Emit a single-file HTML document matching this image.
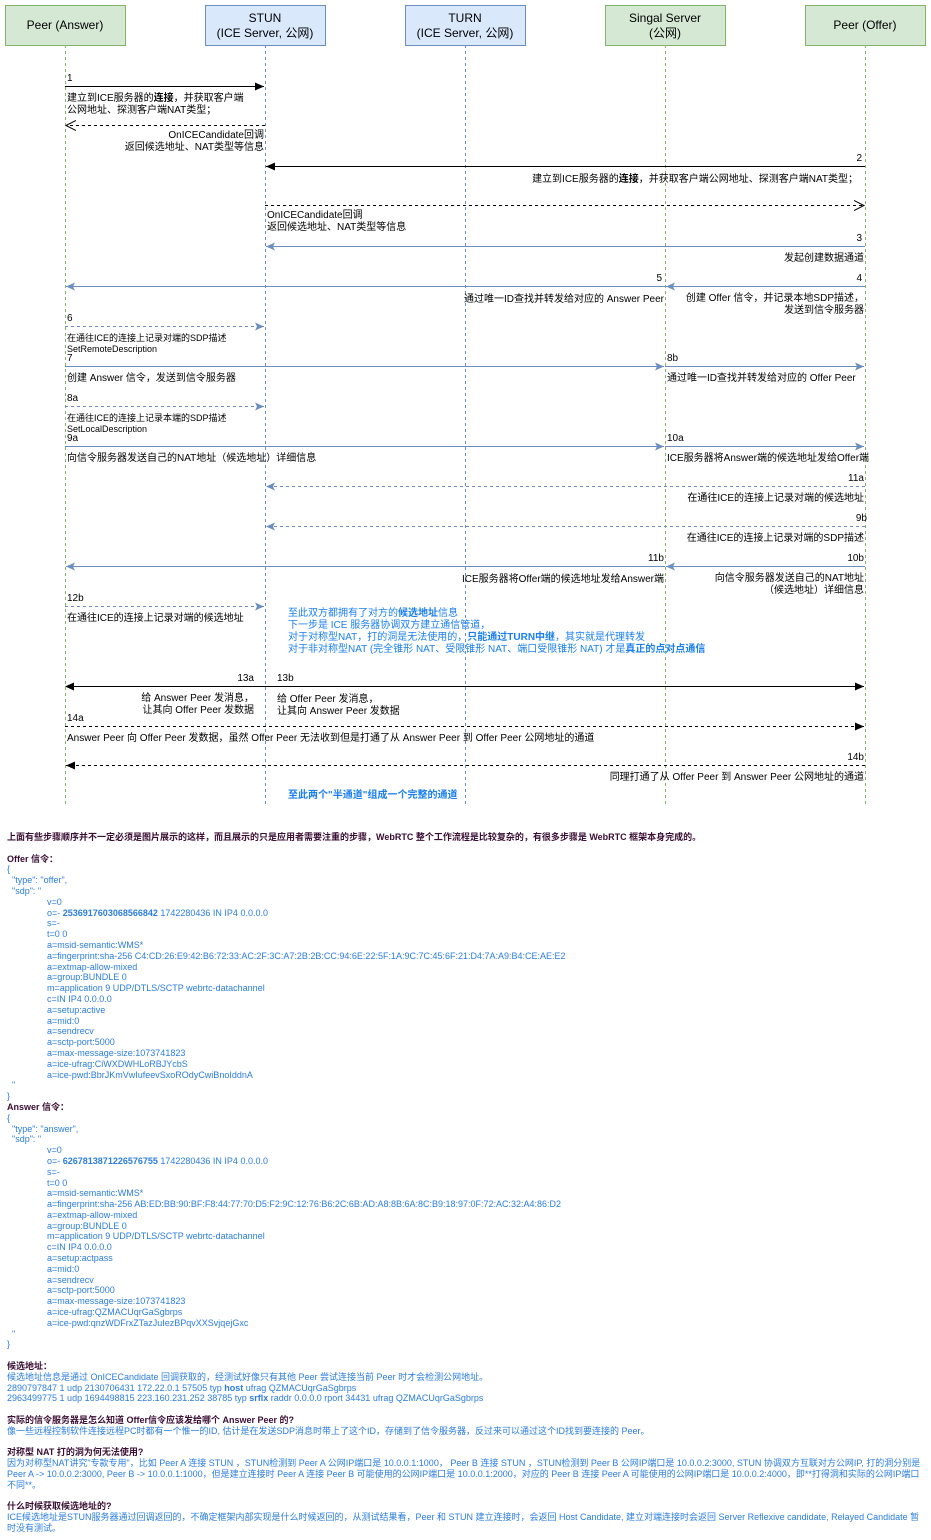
<!DOCTYPE html>
<html><head><meta charset="utf-8"><style>
body{margin:0;width:931px;height:1540px;background:#fff;position:relative;overflow:hidden;font-family:"Liberation Sans","Noto Sans CJK SC",sans-serif;}
svg text{font-family:"Liberation Sans","Noto Sans CJK SC",sans-serif;}
#doc{position:absolute;left:7px;top:832px;font-size:9px;line-height:10.8px;color:#2b7de0;white-space:nowrap;}
#doc .h{color:#3a0d33;font-weight:bold;}
.i1{padding-left:5px}.i2{padding-left:40px}
</style></head><body>
<svg width="931" height="815" style="position:absolute;left:0;top:0">
<defs>
<marker id="bf" markerWidth="10" markerHeight="10" refX="9" refY="5" orient="auto" markerUnits="userSpaceOnUse"><path d="M0,1 L9,5 L0,9 Z" fill="#000"/></marker>
<marker id="bo" markerWidth="12" markerHeight="12" refX="10" refY="6" orient="auto" markerUnits="userSpaceOnUse"><path d="M0,1 L10,6 L0,11" fill="none" stroke="#000"/></marker>
<marker id="uf" markerWidth="10" markerHeight="10" refX="9" refY="5" orient="auto" markerUnits="userSpaceOnUse"><path d="M0,1 L9,5 L0,9 L2,5 Z" fill="#6c8ebf"/></marker>
<marker id="bs" markerWidth="10" markerHeight="10" refX="1" refY="5" orient="auto" markerUnits="userSpaceOnUse"><path d="M9,1 L0,5 L9,9 Z" fill="#000"/></marker>
</defs>
<g stroke-dasharray="3,3" stroke-width="1">
<line x1="65.5" y1="45" x2="65.5" y2="805" stroke="#82b366"/>
<line x1="265.5" y1="45" x2="265.5" y2="805" stroke="#6c8ebf"/>
<line x1="465.5" y1="45" x2="465.5" y2="805" stroke="#6c8ebf"/>
<line x1="665.5" y1="45" x2="665.5" y2="805" stroke="#82b366"/>
<line x1="865.5" y1="45" x2="865.5" y2="805" stroke="#82b366"/>
</g>
<rect x="5.5" y="5.5" width="120" height="40" fill="#d5e8d4" stroke="#82b366"/>
<rect x="205.5" y="5.5" width="120" height="40" fill="#dae8fc" stroke="#6c8ebf"/>
<rect x="405.5" y="5.5" width="120" height="40" fill="#dae8fc" stroke="#6c8ebf"/>
<rect x="605.5" y="5.5" width="120" height="40" fill="#d5e8d4" stroke="#82b366"/>
<rect x="805.5" y="5.5" width="120" height="40" fill="#d5e8d4" stroke="#82b366"/>
<g font-size="12" text-anchor="middle" fill="#000">
<text x="65" y="29">Peer (Answer)</text>
<text x="265" y="22">STUN</text><text x="265" y="37">(ICE Server, 公网)</text>
<text x="465" y="22">TURN</text><text x="465" y="37">(ICE Server, 公网)</text>
<text x="665" y="22">Singal Server</text><text x="665" y="37">(公网)</text>
<text x="865" y="29">Peer (Offer)</text>
</g>
<g fill="none" stroke-width="1">
<line x1="65" y1="86.5" x2="264" y2="86.5" stroke="#000" marker-end="url(#bf)"/>
<line x1="265" y1="125.5" x2="66" y2="125.5" stroke="#000" stroke-dasharray="3,3" marker-end="url(#bo)"/>
<line x1="865" y1="166.5" x2="266" y2="166.5" stroke="#000" marker-end="url(#bf)"/>
<line x1="265" y1="205.5" x2="864" y2="205.5" stroke="#000" stroke-dasharray="3,3" marker-end="url(#bo)"/>
<line x1="865" y1="246.5" x2="266" y2="246.5" stroke="#6c8ebf" marker-end="url(#uf)"/>
<line x1="665" y1="286.5" x2="66" y2="286.5" stroke="#6c8ebf" marker-end="url(#uf)"/>
<line x1="865" y1="286.5" x2="666" y2="286.5" stroke="#6c8ebf" marker-end="url(#uf)"/>
<line x1="65" y1="326.5" x2="264" y2="326.5" stroke="#6c8ebf" stroke-dasharray="3,3" marker-end="url(#uf)"/>
<line x1="65" y1="366.5" x2="664" y2="366.5" stroke="#6c8ebf" marker-end="url(#uf)"/>
<line x1="665" y1="366.5" x2="864" y2="366.5" stroke="#6c8ebf" marker-end="url(#uf)"/>
<line x1="65" y1="406.5" x2="264" y2="406.5" stroke="#6c8ebf" stroke-dasharray="3,3" marker-end="url(#uf)"/>
<line x1="65" y1="446.5" x2="664" y2="446.5" stroke="#6c8ebf" marker-end="url(#uf)"/>
<line x1="665" y1="446.5" x2="864" y2="446.5" stroke="#6c8ebf" marker-end="url(#uf)"/>
<line x1="865" y1="486.5" x2="266" y2="486.5" stroke="#6c8ebf" stroke-dasharray="3,3" marker-end="url(#uf)"/>
<line x1="865" y1="526.5" x2="266" y2="526.5" stroke="#6c8ebf" stroke-dasharray="3,3" marker-end="url(#uf)"/>
<line x1="665" y1="566.5" x2="66" y2="566.5" stroke="#6c8ebf" marker-end="url(#uf)"/>
<line x1="865" y1="566.5" x2="666" y2="566.5" stroke="#6c8ebf" marker-end="url(#uf)"/>
<line x1="65" y1="606.5" x2="264" y2="606.5" stroke="#6c8ebf" stroke-dasharray="3,3" marker-end="url(#uf)"/>
<line x1="66" y1="686.5" x2="864" y2="686.5" stroke="#000" marker-end="url(#bf)" marker-start="url(#bs)"/>
<line x1="65" y1="726.5" x2="864" y2="726.5" stroke="#000" stroke-dasharray="3,3" marker-end="url(#bf)"/>
<line x1="865" y1="765.5" x2="66" y2="765.5" stroke="#000" stroke-dasharray="3,3" marker-end="url(#bf)"/>
</g>
<g font-size="10" fill="#000">
<text x="67" y="81">1</text>
<text x="67" y="101">建立到ICE服务器的<tspan font-weight="bold">连接</tspan>，并获取客户端</text>
<text x="67" y="113">公网地址、探测客户端NAT类型；</text>
<text x="264" y="138" text-anchor="end">OnICECandidate回调</text>
<text x="264" y="150" text-anchor="end">返回候选地址、NAT类型等信息</text>
<text x="862" y="161" text-anchor="end">2</text>
<text x="858" y="182" text-anchor="end">建立到ICE服务器的<tspan font-weight="bold">连接</tspan>，并获取客户端公网地址、探测客户端NAT类型；</text>
<text x="267" y="218">OnICECandidate回调</text>
<text x="267" y="230">返回候选地址、NAT类型等信息</text>
<text x="862" y="241" text-anchor="end">3</text>
<text x="864" y="261" text-anchor="end">发起创建数据通道</text>
<text x="662" y="281" text-anchor="end">5</text>
<text x="862" y="281" text-anchor="end">4</text>
<text x="664" y="302" text-anchor="end">通过唯一ID查找并转发给对应的 Answer Peer</text>
<text x="864" y="301" text-anchor="end">创建 Offer 信令，并记录本地SDP描述，</text>
<text x="864" y="313" text-anchor="end">发送到信令服务器</text>
<text x="67" y="321">6</text>
<text x="67" y="341" font-size="9">在通往ICE的连接上记录对端的SDP描述</text>
<text x="67" y="352" font-size="9">SetRemoteDescription</text>
<text x="67" y="361">7</text>
<text x="667" y="361">8b</text>
<text x="67" y="381">创建 Answer 信令，发送到信令服务器</text>
<text x="667" y="381">通过唯一ID查找并转发给对应的 Offer Peer</text>
<text x="67" y="401">8a</text>
<text x="67" y="421" font-size="9">在通往ICE的连接上记录本端的SDP描述</text>
<text x="67" y="432" font-size="9">SetLocalDescription</text>
<text x="67" y="441">9a</text>
<text x="667" y="441">10a</text>
<text x="67" y="461">向信令服务器发送自己的NAT地址（候选地址）详细信息</text>
<text x="667" y="461">ICE服务器将Answer端的候选地址发给Offer端</text>
<text x="864" y="481" text-anchor="end">11a</text>
<text x="864" y="501" text-anchor="end">在通往ICE的连接上记录对端的候选地址</text>
<text x="867" y="521" text-anchor="end">9b</text>
<text x="864" y="541" text-anchor="end">在通往ICE的连接上记录对端的SDP描述</text>
<text x="664" y="561" text-anchor="end">11b</text>
<text x="864" y="561" text-anchor="end">10b</text>
<text x="664" y="582" text-anchor="end">ICE服务器将Offer端的候选地址发给Answer端</text>
<text x="864" y="581" text-anchor="end">向信令服务器发送自己的NAT地址</text>
<text x="864" y="593" text-anchor="end">（候选地址）详细信息</text>
<text x="67" y="601">12b</text>
<text x="67" y="621">在通往ICE的连接上记录对端的候选地址</text>
<text x="254" y="681" text-anchor="end">13a</text>
<text x="277" y="681">13b</text>
<text x="254" y="701" text-anchor="end">给 Answer Peer 发消息，</text>
<text x="254" y="713" text-anchor="end">让其向 Offer Peer 发数据</text>
<text x="277" y="702">给 Offer Peer 发消息，</text>
<text x="277" y="714">让其向 Answer Peer 发数据</text>
<text x="67" y="721">14a</text>
<text x="67" y="741">Answer Peer 向 Offer Peer 发数据，虽然 Offer Peer 无法收到但是打通了从 Answer Peer 到 Offer Peer 公网地址的通道</text>
<text x="864" y="760" text-anchor="end">14b</text>
<text x="864" y="780" text-anchor="end">同理打通了从 Offer  Peer 到 Answer Peer 公网地址的通道</text>
</g>
<g font-size="10" fill="#1a7ff0">
<text x="288" y="616">至此双方都拥有了对方的<tspan font-weight="bold">候选地址</tspan>信息</text>
<text x="288" y="628">下一步是 ICE 服务器协调双方建立通信管道，</text>
<text x="288" y="640">对于对称型NAT，打的洞是无法使用的，<tspan font-weight="bold">只能通过TURN中继</tspan>，其实就是代理转发</text>
<text x="288" y="652">对于非对称型NAT (完全锥形 NAT、受限锥形 NAT、端口受限锥形 NAT) 才是<tspan font-weight="bold">真正的点对点通信</tspan></text>
<text x="288" y="798" font-weight="bold">至此两个"半通道"组成一个完整的通道</text>
</g>
</svg>
<div id="doc">
<div class="h">上面有些步骤顺序并不一定必须是图片展示的这样，而且展示的只是应用者需要注重的步骤，WebRTC 整个工作流程是比较复杂的，有很多步骤是 WebRTC 框架本身完成的。</div>
<br>
<div class="h">Offer 信令：</div>
<div>{</div>
<div class="i1">"type": "offer",</div>
<div class="i1">"sdp": "</div>
<div class="i2">v=0</div>
<div class="i2">o=- <b>2536917603068566842</b> 1742280436 IN IP4 0.0.0.0</div>
<div class="i2">s=-</div>
<div class="i2">t=0 0</div>
<div class="i2">a=msid-semantic:WMS*</div>
<div class="i2">a=fingerprint:sha-256 C4:CD:26:E9:42:B6:72:33:AC:2F:3C:A7:2B:2B:CC:94:6E:22:5F:1A:9C:7C:45:6F:21:D4:7A:A9:B4:CE:AE:E2</div>
<div class="i2">a=extmap-allow-mixed</div>
<div class="i2">a=group:BUNDLE 0</div>
<div class="i2">m=application 9 UDP/DTLS/SCTP webrtc-datachannel</div>
<div class="i2">c=IN IP4 0.0.0.0</div>
<div class="i2">a=setup:active</div>
<div class="i2">a=mid:0</div>
<div class="i2">a=sendrecv</div>
<div class="i2">a=sctp-port:5000</div>
<div class="i2">a=max-message-size:1073741823</div>
<div class="i2">a=ice-ufrag:CiWXDWHLoRBJYcbS</div>
<div class="i2">a=ice-pwd:BbrJKmVwIufeevSxoROdyCwiBnoIddnA</div>
<div class="i1">"</div>
<div>}</div>
<div class="h">Answer 信令：</div>
<div>{</div>
<div class="i1">"type": "answer",</div>
<div class="i1">"sdp": "</div>
<div class="i2">v=0</div>
<div class="i2">o=- <b>6267813871226576755</b> 1742280436 IN IP4 0.0.0.0</div>
<div class="i2">s=-</div>
<div class="i2">t=0 0</div>
<div class="i2">a=msid-semantic:WMS*</div>
<div class="i2">a=fingerprint:sha-256 AB:ED:BB:90:BF:F8:44:77:70:D5:F2:9C:12:76:B6:2C:6B:AD:A8:8B:6A:8C:B9:18:97:0F:72:AC:32:A4:86:D2</div>
<div class="i2">a=extmap-allow-mixed</div>
<div class="i2">a=group:BUNDLE 0</div>
<div class="i2">m=application 9 UDP/DTLS/SCTP webrtc-datachannel</div>
<div class="i2">c=IN IP4 0.0.0.0</div>
<div class="i2">a=setup:actpass</div>
<div class="i2">a=mid:0</div>
<div class="i2">a=sendrecv</div>
<div class="i2">a=sctp-port:5000</div>
<div class="i2">a=max-message-size:1073741823</div>
<div class="i2">a=ice-ufrag:QZMACUqrGaSgbrps</div>
<div class="i2">a=ice-pwd:qnzWDFrxZTazJuIezBPqvXXSvjqejGxc</div>
<div class="i1">"</div>
<div>}</div>
<br>
<div class="h">候选地址：</div>
<div>候选地址信息是通过 OnICECandidate 回调获取的，经测试好像只有其他 Peer 尝试连接当前 Peer 时才会检测公网地址。</div>
<div>2890797847 1 udp 2130706431 172.22.0.1 57505 typ <b>host</b> ufrag QZMACUqrGaSgbrps</div>
<div>2963499775 1 udp 1694498815 223.160.231.252 38785 typ <b>srflx</b> raddr 0.0.0.0 rport 34431 ufrag QZMACUqrGaSgbrps</div>
<br>
<div class="h">实际的信令服务器是怎么知道 Offer信令应该发给哪个 Answer Peer 的?</div>
<div>像一些远程控制软件连接远程PC时都有一个惟一的ID, 估计是在发送SDP消息时带上了这个ID，存储到了信令服务器，反过来可以通过这个ID找到要连接的 Peer。</div>
<br>
<div class="h">对称型 NAT 打的洞为何无法使用?</div>
<div>因为对称型NAT讲究"专款专用"，比如 Peer A 连接 STUN ，STUN检测到 Peer A 公网IP端口是 10.0.0.1:1000， Peer B 连接 STUN ，STUN检测到 Peer B 公网IP端口是 10.0.0.2:3000, STUN 协调双方互联对方公网IP, 打的洞分别是</div>
<div>Peer A -&gt; 10.0.0.2:3000, Peer B -&gt; 10.0.0.1:1000，但是建立连接时 Peer A 连接 Peer B 可能使用的公网IP端口是 10.0.0.1:2000，对应的 Peer B 连接 Peer A 可能使用的公网IP端口是 10.0.0.2:4000，即**打得洞和实际的公网IP端口</div>
<div>不同**。</div>
<br>
<div class="h">什么时候获取候选地址的?</div>
<div>ICE候选地址是STUN服务器通过回调返回的，不确定框架内部实现是什么时候返回的，从测试结果看，Peer 和 STUN 建立连接时，会返回 Host Candidate, 建立对端连接时会返回  Server Reflexive candidate, Relayed Candidate 暂</div>
<div>时没有测试。</div>
</div>
</body></html>
